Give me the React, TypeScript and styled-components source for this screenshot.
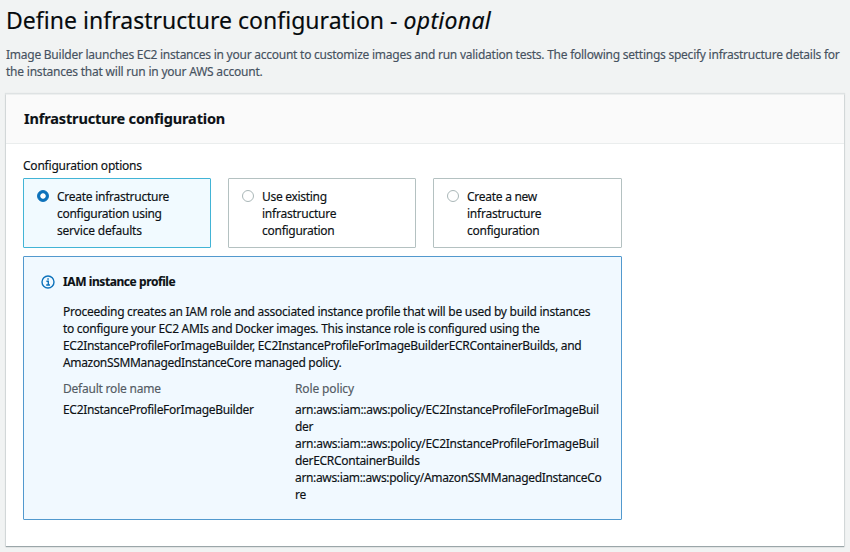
import React from 'react';
import styled, { createGlobalStyle } from 'styled-components';

const GlobalStyle = createGlobalStyle`
  *, *::before, *::after { box-sizing: border-box; }
  body {
    margin: 0;
    background: #f1f3f3;
    color: #0c1115;
    font-family: 'Noto Sans', 'Open Sans', sans-serif;
    font-size: 12px;
    line-height: 17px;
    -webkit-text-stroke: 0.15px currentColor;
  }
`;

const Page = styled.main`
  height: 552px;
  padding: 4px 6px 0;
  overflow: hidden;
`;

const Line = styled.span<{ $track: number }>`
  display: block;
  white-space: nowrap;
  letter-spacing: ${(p) => p.$track}px;
`;

const Title = styled.h1`
  display: flex;
  gap: 6px;
  margin: 0;
  font-size: 23px;
  font-weight: 400;
  line-height: 32px;
  color: #060a0d;
`;

const Description = styled.p`
  margin: 10px 0 0;
  color: #46525f;
`;

const Card = styled.section`
  height: 452px;
  margin-top: 14px;
  background: #fff;
  border-top: 1px solid #edefef;
  box-shadow: 0 1px 1px 0 rgba(0, 28, 36, 0.3), 0 0 1px 1px rgba(0, 28, 36, 0.08);
`;

const CardHeader = styled.header`
  height: 49px;
  padding: 13px 18px 0;
  background: #fafafa;
  border-bottom: 1px solid #eaeded;
`;

const CardTitle = styled.h2`
  margin: 0;
  font-size: 14.5px;
  font-weight: 700;
  line-height: 20px;
`;

const CardBody = styled.div`
  width: 616px;
  padding: 13px 0 0 17px;
`;

const Tiles = styled.div`
  display: grid;
  grid-template-columns: 188px 188px 189px;
  column-gap: 17px;
  margin-top: 4px;
`;

const Tile = styled.label<{ $selected?: boolean }>`
  display: flex;
  gap: 8px;
  height: 70px;
  padding: 9px 13px 0;
  background: ${(p) => (p.$selected ? '#f1faff' : '#fff')};
  border: 1px solid ${(p) => (p.$selected ? '#42b4d6' : '#b4c1c1')};
  border-radius: 1px;
`;

const Radio = styled.span<{ $selected?: boolean }>`
  flex: none;
  width: 12px;
  height: 12px;
  margin-top: 2px;
  border: 1px solid ${(p) => (p.$selected ? '#0d72bb' : '#aab7b8')};
  border-radius: 50%;
  background: ${(p) =>
    p.$selected ? 'radial-gradient(circle, #fff 2.3px, #0d72bb 3.1px)' : '#fff'};
  background-origin: border-box;
`;

const Alert = styled.div`
  display: flex;
  gap: 8px;
  width: 599px;
  height: 264px;
  margin-top: 8px;
  padding: 16px 17px 0;
  background: #f1f9ff;
  border: 1px solid #5299ce;
  border-radius: 1px;
`;

const InfoIcon = styled.svg`
  flex: none;
  width: 14px;
  height: 14px;
  margin-top: 2px;
`;

const AlertTitle = styled.h3`
  margin: 0 0 13px;
  font-size: 12px;
  font-weight: 700;
`;

const Paragraph = styled.p`
  margin: 0;
`;

const Details = styled.dl`
  display: grid;
  grid-template-columns: 232px 1fr;
  margin: 9px 0 0;
`;

const Term = styled.dt`
  margin-bottom: 4px;
  color: #545b64;
`;

const Value = styled.dd`
  margin: 0;
`;

type TextLine = [text: string, track: number];

const Lines = ({ lines }: { lines: TextLine[] }) => (
  <>
    {lines.map(([text, track], i) => (
      <Line key={i} $track={track}>
        {text}
      </Line>
    ))}
  </>
);

const options: { selected?: boolean; lines: TextLine[] }[] = [
  {
    selected: true,
    lines: [
      ['Create infrastructure', -0.26],
      ['configuration using', -0.29],
      ['service defaults', -0.2],
    ],
  },
  {
    lines: [
      ['Use existing', -0.3],
      ['infrastructure', -0.24],
      ['configuration', -0.27],
    ],
  },
  {
    lines: [
      ['Create a new', -0.27],
      ['infrastructure', -0.24],
      ['configuration', -0.27],
    ],
  },
];

export default function App() {
  return (
    <>
      <GlobalStyle />
      <Page>
        <Title>
          <Line $track={0.03}>Define infrastructure configuration -</Line>
          <Line as="em" $track={0.3}>
            optional
          </Line>
        </Title>
        <Description>
          <Lines
            lines={[
              [
                'Image Builder launches EC2 instances in your account to customize images and run validation tests. The following settings specify infrastructure details for',
                -0.245,
              ],
              ['the instances that will run in your AWS account.', -0.216],
            ]}
          />
        </Description>
        <Card>
          <CardHeader>
            <CardTitle>
              <Line $track={-0.15}>Infrastructure configuration</Line>
            </CardTitle>
          </CardHeader>
          <CardBody>
            <Line $track={-0.22}>Configuration options</Line>
            <Tiles>
              {options.map((option, i) => (
                <Tile key={i} $selected={option.selected}>
                  <Radio $selected={option.selected} />
                  <div>
                    <Lines lines={option.lines} />
                  </div>
                </Tile>
              ))}
            </Tiles>
            <Alert>
              <InfoIcon viewBox="0 0 14 14" fill="none" stroke="#0d72bb" strokeWidth="1.4">
                <circle cx="7" cy="7" r="6" />
                <path d="M5.4 6.2H7.3V10M5.2 10H9M6.3 4H7.8" />
              </InfoIcon>
              <div>
                <AlertTitle>
                  <Line $track={-0.42}>IAM instance profile</Line>
                </AlertTitle>
                <Paragraph>
                  <Lines
                    lines={[
                      [
                        'Proceeding creates an IAM role and associated instance profile that will be used by build instances',
                        -0.255,
                      ],
                      [
                        'to configure your EC2 AMIs and Docker images. This instance role is configured using the',
                        -0.287,
                      ],
                      [
                        'EC2InstanceProfileForImageBuilder, EC2InstanceProfileForImageBuilderECRContainerBuilds, and',
                        -0.3,
                      ],
                      ['AmazonSSMManagedInstanceCore managed policy.', -0.335],
                    ]}
                  />
                </Paragraph>
                <Details>
                  <Term>
                    <Line $track={-0.22}>Default role name</Line>
                  </Term>
                  <Term>
                    <Line $track={-0.13}>Role policy</Line>
                  </Term>
                  <Value>
                    <Line $track={-0.31}>EC2InstanceProfileForImageBuilder</Line>
                  </Value>
                  <Value>
                    <Lines
                      lines={[
                        ['arn:aws:iam::aws:policy/EC2InstanceProfileForImageBuil', -0.282],
                        ['der', -0.3],
                        ['arn:aws:iam::aws:policy/EC2InstanceProfileForImageBuil', -0.282],
                        ['derECRContainerBuilds', -0.3],
                        ['arn:aws:iam::aws:policy/AmazonSSMManagedInstanceCo', -0.345],
                        ['re', -0.3],
                      ]}
                    />
                  </Value>
                </Details>
              </div>
            </Alert>
          </CardBody>
        </Card>
      </Page>
    </>
  );
}
